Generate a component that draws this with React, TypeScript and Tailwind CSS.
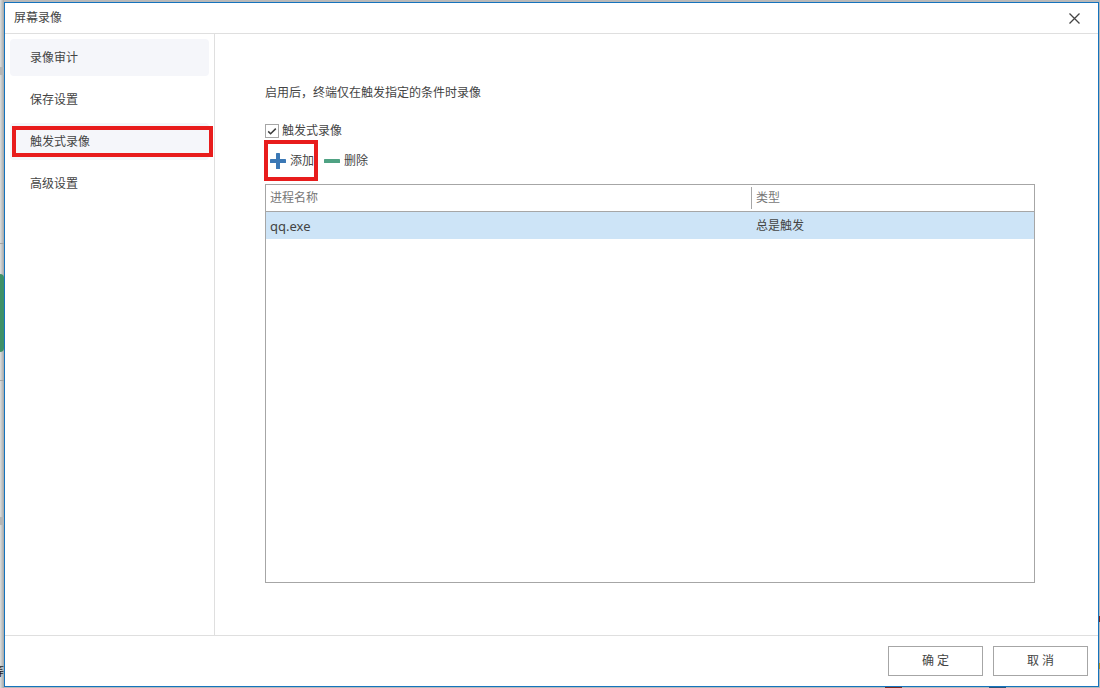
import React, { useState } from 'react';
import clsx from 'clsx';

const menuItems = [
  { key: 'audit', label: '录像审计', hovered: true },
  { key: 'save', label: '保存设置' },
  { key: 'trigger', label: '触发式录像' },
  { key: 'advanced', label: '高级设置' },
];

const processes = [{ name: 'qq.exe', type: '总是触发' }];

function CloseIcon() {
  return (
    <svg width="11" height="11" viewBox="0 0 11 11" fill="none" stroke="#444444" strokeWidth="1.3">
      <path d="M0.5 0.5L10.5 10.5M10.5 0.5L0.5 10.5" />
    </svg>
  );
}

function PlusIcon() {
  return (
    <svg width="16" height="16" viewBox="0 0 16 16" fill="#3b78b5">
      <rect x="0" y="6" width="16" height="4" rx="0.6" />
      <rect x="6" y="0" width="4" height="16" rx="0.6" />
    </svg>
  );
}

function MinusIcon() {
  return (
    <svg width="16" height="16" viewBox="0 0 16 16" fill="#4fa283">
      <rect x="0" y="6" width="16" height="4" rx="0.6" />
    </svg>
  );
}

function CheckIcon() {
  return (
    <svg
      className="pointer-events-none absolute inset-0"
      width="14"
      height="14"
      viewBox="0 0 14 14"
      fill="none"
      stroke="#3c3c3c"
      strokeWidth="1.5"
    >
      <path d="M3.2 7.4L5.6 9.8L10.8 4.6" />
    </svg>
  );
}

// The page behind the window, visible only as thin slivers at its edges
function Backdrop() {
  return (
    <div className="absolute inset-0 -z-10 overflow-hidden bg-[#b9b9b9]" aria-hidden="true">
      <div className="absolute inset-y-0 left-0 w-1 bg-linear-to-r from-[#dcdfdf] to-[#a6a8a8]" />
      <div className="absolute left-0 top-[67px] h-2 w-1 bg-[#b4b6b6]" />
      <div className="absolute left-0 top-[243px] h-px w-1 bg-[#a3a5a5]" />
      <div className="absolute left-0 top-[274px] h-[78px] w-1 rounded-tr-sm rounded-br-sm bg-[#3d9068]" />
      <div className="absolute left-0 top-[380px] h-px w-1 bg-[#a3a5a5]" />
      <div className="absolute left-0 top-[517px] h-2 w-1 bg-[#b4b6b6]" />
      <div className="absolute -left-2 top-[664px] leading-4 text-[#222222]">等</div>
      <div className="absolute right-0 top-[616px] h-1.5 w-px bg-[#7d2a1c]" />
      <div className="absolute right-0 top-[663px] h-1.5 w-px bg-[#b59226]" />
      <div className="absolute bottom-0 left-[885px] h-px w-[17px] bg-[#7d2a1c]" />
      <div className="absolute bottom-0 left-[989px] h-px w-[17px] bg-[#2d5378]" />
    </div>
  );
}

export default function App() {
  const [active, setActive] = useState('trigger');
  const [enabled, setEnabled] = useState(true);

  return (
    <div className="relative isolate flex h-screen flex-col pb-px pl-1 pr-px pt-0.5 font-['Noto_Sans','Noto_Sans_CJK_SC',sans-serif] text-xs text-[#444444]">
      <Backdrop />
      <div className="flex flex-1 flex-col border border-[#1573bd] bg-white">
        <header className="flex h-[31px] items-center justify-between border-b border-[#dfdfdf] pl-[9px] pr-[18px]">
          <h1>屏幕录像</h1>
          <button type="button" aria-label="关闭">
            <CloseIcon />
          </button>
        </header>

        <div className="flex flex-1">
          <nav className="flex w-[210px] flex-col gap-[5px] border-r border-[#dfdfdf] p-[5px]">
            {menuItems.map((item) => (
              <button
                key={item.key}
                type="button"
                onClick={() => setActive(item.key)}
                className={clsx(
                  'relative h-[37px] rounded pl-5 text-left',
                  (item.hovered || active === item.key) && 'bg-[#f5f6fa]'
                )}
              >
                {item.label}
                {active === item.key && (
                  <span className="absolute -right-1 bottom-[3px] left-0.5 top-[3px] border-4 border-[#e81c1c]" />
                )}
              </button>
            ))}
          </nav>

          <main className="flex flex-1 flex-col pb-[52px] pl-[50px] pr-[63px] pt-[51px]">
            <p>启用后，终端仅在触发指定的条件时录像</p>

            <label className="mt-[23px] flex h-[14px] items-center gap-[3px]">
              <span className="relative">
                <input
                  type="checkbox"
                  checked={enabled}
                  onChange={(e) => setEnabled(e.target.checked)}
                  className="block h-[14px] w-[14px] appearance-none border border-[#a6a6a6] bg-white"
                />
                {enabled && <CheckIcon />}
              </span>
              触发式录像
            </label>

            <div className="flex h-[46px] items-center gap-2.5 pl-[5px]">
              <button type="button" className="relative flex items-center gap-1">
                <PlusIcon />
                添加
                <span className="absolute -bottom-3 -left-1.5 -right-1 -top-[13px] border-4 border-[#e81c1c]" />
              </button>
              <button type="button" className="flex items-center gap-1">
                <MinusIcon />
                删除
              </button>
            </div>

            <div className="flex-1 border border-[#a6a6a6]">
              <table className="w-full table-fixed border-separate border-spacing-0 text-left">
                <thead>
                  <tr className="h-[27px] text-[#777777]">
                    <th className="w-[485px] border-b border-[#a6a6a6] p-0 pl-1 font-normal">进程名称</th>
                    <th className="border-b border-[#a6a6a6] p-0 font-normal">
                      <div className="h-[22px] border-l border-[#a6a6a6] pl-1 leading-[22px]">类型</div>
                    </th>
                  </tr>
                </thead>
                <tbody>
                  {processes.map((process) => (
                    <tr key={process.name} className="h-[27px] bg-[#cde4f7]">
                      <td className="p-0 pl-1 text-[13px] leading-4">{process.name}</td>
                      <td className="p-0 pl-[5px]">{process.type}</td>
                    </tr>
                  ))}
                </tbody>
              </table>
            </div>
          </main>
        </div>

        <footer className="flex h-[51px] items-center justify-end gap-2.5 border-t border-[#dfdfdf] px-2.5">
          <button type="button" className="h-[30px] w-[95px] border border-[#a6a6a6]">
            确 定
          </button>
          <button type="button" className="h-[30px] w-[95px] border border-[#a6a6a6]">
            取 消
          </button>
        </footer>
      </div>
    </div>
  );
}
